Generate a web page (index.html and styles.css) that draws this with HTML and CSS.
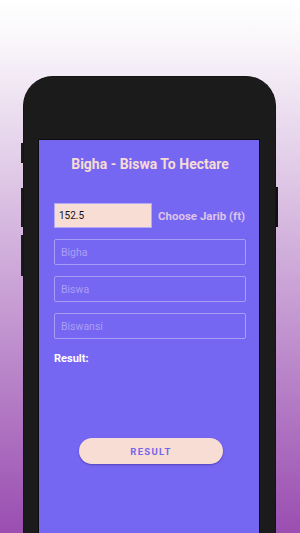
FILE: index.html
```html
<html>
  <head>
    <meta charset="UTF-8">
    <title>Bigha - Biswa To Hectare</title>
    <link rel="stylesheet" href="styles.css">
  </head>
  <body>
    <div class="phone">
      <div class="screen">
        <h1 class="title">Bigha - Biswa To Hectare</h1>
        <div class="jarib-row">
          <input class="jarib-input" type="text" value="152.5">
          <span class="jarib-label">Choose Jarib (ft)</span>
        </div>
        <input class="field" type="text" placeholder="Bigha">
        <input class="field" type="text" placeholder="Biswa">
        <input class="field" type="text" placeholder="Biswansi">
        <div class="result-label">Result:</div>
        <button class="result-btn">RESULT</button>
      </div>
    </div>
  </body>
</html>
```

FILE: styles.css
```css
body {
  font-family: Roboto, "Liberation Sans", sans-serif;
  margin: 0;
  padding: 76px 0 0;
  height: 533px;
  box-sizing: border-box;
  overflow: hidden;
  background: linear-gradient(to bottom, #ffffff 0%, #f9f6fa 8%, #9a4eb1 100%);
}
.phone {
  position: relative;
  width: 253px;
  height: 457px;
  margin: 0 0 0 23px;
  box-sizing: border-box;
  padding: 62px 15px 0 14px;
  background: #1b1b1b;
  border: 1px solid #141414;
  border-bottom: none;
  border-radius: 30px 30px 0 0;
}
/* side buttons */
.phone::before {
  content: "";
  position: absolute;
  left: -3px;
  top: 66px;
  width: 2px;
  height: 133px;
  background: linear-gradient(to bottom,
    #1b1b1b 0, #1b1b1b 20px, transparent 20px, transparent 45px,
    #1b1b1b 45px, #1b1b1b 84px, transparent 84px, transparent 92px,
    #1b1b1b 92px, #1b1b1b 133px);
}
.phone::after {
  content: "";
  position: absolute;
  right: -3px;
  top: 110px;
  width: 2px;
  height: 40px;
  background: #111;
}
.screen {
  height: 100%;
  box-sizing: border-box;
  background: #7667f2;
  border: 1px solid #0c0c0c;
  border-bottom: none;
  padding: 15px 13px 0 15px;
  display: flex;
  flex-direction: column;
}
.title {
  margin: 0;
  font-size: 14px;
  line-height: 18px;
  font-weight: 700;
  text-align: center;
  color: #f6dcd4;
}
.jarib-row {
  display: flex;
  align-items: center;
  margin-top: 30px;
}
.jarib-input {
  width: 98px;
  height: 25px;
  box-sizing: border-box;
  border: 1px solid #b3a9f5;
  background: #f8ddd5;
  font-family: inherit;
  font-size: 10px;
  color: #111;
  padding: 0 0 0 4px;
  outline: none;
}
.jarib-label {
  margin-left: 6px;
  font-size: 11.5px;
  font-weight: 700;
  color: #dcc3ea;
  white-space: nowrap;
}
.field {
  width: 192px;
  height: 26px;
  box-sizing: border-box;
  margin-top: 11px;
  border: 1px solid #a79ef5;
  border-radius: 2px;
  background: transparent;
  font-family: inherit;
  font-size: 10.5px;
  padding: 0 0 0 6px;
  outline: none;
  color: #fff;
}
.field::placeholder {
  color: #ab9ff4;
}
.result-label {
  margin-top: 13px;
  font-size: 11px;
  font-weight: 700;
  color: #ffffff;
}
.result-btn {
  align-self: center;
  margin: 73px 0 0 2px;
  width: 144px;
  height: 26px;
  border: none;
  border-radius: 13px;
  background: #f8ddd5;
  box-shadow: 0 1px 2px rgba(40, 20, 120, 0.45);
  font-family: inherit;
  font-size: 9.5px;
  font-weight: 700;
  letter-spacing: 1.3px;
  color: #7467ea;
}
```
